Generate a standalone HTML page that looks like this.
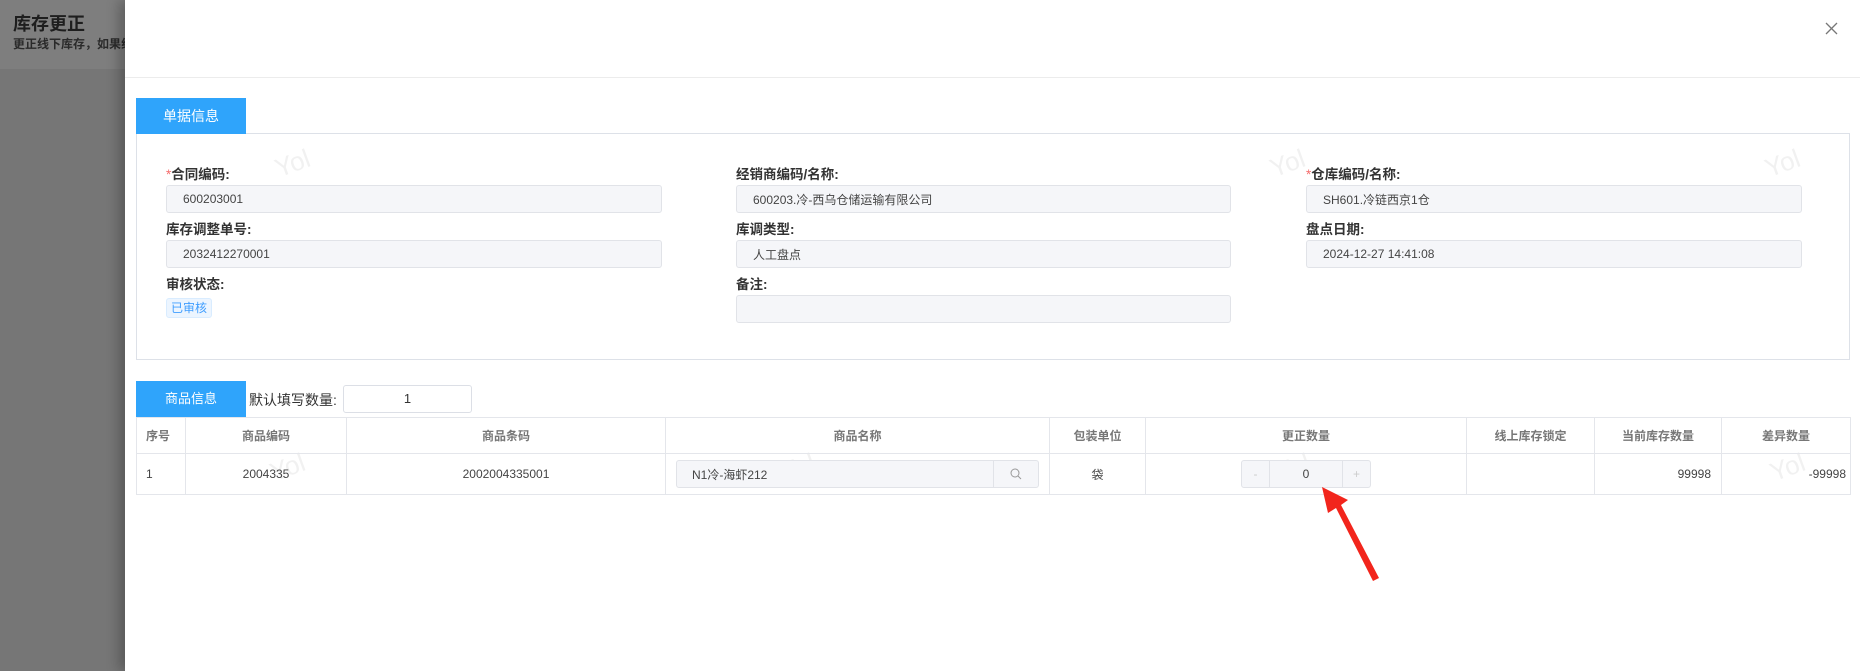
<!DOCTYPE html>
<html><head><meta charset="utf-8">
<style>
*{box-sizing:border-box;margin:0;padding:0}
body{width:1860px;height:671px;overflow:hidden;background:#767676;font-family:"Liberation Sans","Noto Sans CJK SC",sans-serif;position:relative}
.hdr{position:absolute;left:0;top:0;width:1860px;height:69px;background:#7e7e7e}
.t1{position:absolute;left:13px;top:10px;font-size:18px;font-weight:bold;color:#1e1e1e}
.t2{position:absolute;left:13px;top:35px;font-size:12px;font-weight:bold;color:#2a2a2a;white-space:nowrap}
.drawer{position:absolute;left:125px;top:0;width:1735px;height:671px;background:#fff;box-shadow:-6px 0 12px rgba(0,0,0,.25)}
.a{position:absolute}
.div{left:0;top:77px;width:1735px;height:1px;background:#ececec}
.tab{background:#2fa4fb;color:#fff;font-size:14px;text-align:center}
.lbl{font-size:13.5px;font-weight:bold;color:#333}
.lbl i{color:#f56c6c;font-style:normal;font-weight:normal}
.inp{background:#f5f6f9;border:1px solid #e1e3e8;border-radius:3px;font-size:12px;color:#444;padding-left:16px;display:flex;align-items:center}
table{border-collapse:collapse;position:absolute;left:11px;top:417px;width:1714px;table-layout:fixed}
td,th{border:1px solid #e4e6eb;font-size:12px;text-align:center;color:#444}
th{height:36px;color:#777;font-weight:bold}
td{height:41px}
.wm{color:#f1f1f1;font-size:26px;transform:rotate(-20deg);font-family:"Liberation Sans",sans-serif}
</style></head><body>
<div class="hdr"></div>
<div class="t1">库存更正</div>
<div class="t2">更正线下库存，如果线下库存有变化请及时更正</div>
<div class="drawer">
  <div class="a div"></div>
  <svg class="a" style="left:1700px;top:22px" width="13" height="13" viewBox="0 0 13 13"><path d="M1 1L12 12M12 1L1 12" stroke="#777" stroke-width="1.3"/></svg>
  <div class="a" style="left:11px;top:133px;width:1714px;height:227px;border:1px solid #dde1e8"></div>
  <div class="a tab" style="left:11px;top:98px;width:110px;height:36px;line-height:36px">单据信息</div>

  <div class="a lbl" style="left:41px;top:163px"><i>*</i>合同编码:</div>
  <div class="a inp" style="left:41px;top:185px;width:496px;height:28px">600203001</div>
  <div class="a lbl" style="left:41px;top:218px">库存调整单号:</div>
  <div class="a inp" style="left:41px;top:240px;width:496px;height:28px">2032412270001</div>
  <div class="a lbl" style="left:41px;top:273px">审核状态:</div>
  <div class="a" style="left:41px;top:298px;width:46px;height:20px;background:#ecf5ff;border:1px solid #d9ecff;border-radius:3px;color:#409eff;font-size:12px;text-align:center;line-height:18px">已审核</div>

  <div class="a lbl" style="left:611px;top:163px">经销商编码/名称:</div>
  <div class="a inp" style="left:611px;top:185px;width:495px;height:28px">600203.冷-西乌仓储运输有限公司</div>
  <div class="a lbl" style="left:611px;top:218px">库调类型:</div>
  <div class="a inp" style="left:611px;top:240px;width:495px;height:28px">人工盘点</div>
  <div class="a lbl" style="left:611px;top:273px">备注:</div>
  <div class="a inp" style="left:611px;top:295px;width:495px;height:28px"></div>

  <div class="a lbl" style="left:1181px;top:163px"><i>*</i>仓库编码/名称:</div>
  <div class="a inp" style="left:1181px;top:185px;width:496px;height:28px">SH601.冷链西京1仓</div>
  <div class="a lbl" style="left:1181px;top:218px">盘点日期:</div>
  <div class="a inp" style="left:1181px;top:240px;width:496px;height:28px">2024-12-27 14:41:08</div>

  <div class="a tab" style="left:11px;top:381px;width:110px;height:36px;line-height:36px;font-size:13px">商品信息</div>
  <div class="a" style="left:124px;top:390px;font-size:14px;color:#333">默认填写数量:</div>
  <div class="a" style="left:218px;top:385px;width:129px;height:28px;border:1px solid #dcdfe6;border-radius:3px;text-align:center;line-height:26px;font-size:13px;color:#333">1</div>

  <div class="a wm" style="left:150px;top:148px">Yol</div>
  <div class="a wm" style="left:1145px;top:148px">Yol</div>
  <div class="a wm" style="left:1640px;top:148px">Yol</div>
  <div class="a wm" style="left:145px;top:452px">Yol</div>
  <div class="a wm" style="left:655px;top:452px">Yol</div>
  <div class="a wm" style="left:1150px;top:452px">Yol</div>
  <div class="a wm" style="left:1645px;top:452px">Yol</div>

  <table>
    <colgroup><col style="width:49px"><col style="width:161px"><col style="width:319px"><col style="width:384px"><col style="width:96px"><col style="width:321px"><col style="width:128px"><col style="width:127px"><col style="width:129px"></colgroup>
    <tr><th style="text-align:left;padding-left:9px">序号</th><th>商品编码</th><th>商品条码</th><th>商品名称</th><th>包装单位</th><th>更正数量</th><th>线上库存锁定</th><th>当前库存数量</th><th>差异数量</th></tr>
    <tr><td style="text-align:left;padding-left:9px">1</td><td>2004335</td><td>2002004335001</td>
      <td><div style="margin:0 10px;height:28px;border:1px solid #e1e3e8;border-radius:3px;background:#f5f6f9;display:flex;align-items:center;font-size:12px;text-align:left"><span style="flex:1;padding-left:15px">N1冷-海虾212</span><span style="width:45px;height:26px;border-left:1px solid #e1e3e8;display:flex;align-items:center;justify-content:center"><svg width="12" height="12" viewBox="0 0 12 12"><circle cx="5" cy="5" r="4" fill="none" stroke="#999" stroke-width="1"/><path d="M8 8L11 11" stroke="#999"/></svg></span></div></td>
      <td>袋</td>
      <td><div style="margin:0 auto;width:130px;height:28px;border:1px solid #e1e3e8;border-radius:3px;background:#f5f6f9;display:flex;font-size:12px"><span style="width:28px;border-right:1px solid #e1e3e8;color:#ccc;line-height:26px">-</span><span style="flex:1;line-height:26px;color:#444">0</span><span style="width:28px;border-left:1px solid #e1e3e8;color:#ccc;line-height:26px">+</span></div></td>
      <td></td><td style="text-align:right;padding-right:10px">99998</td><td style="text-align:right;padding-right:4px">-99998</td></tr>
  </table>
</div>
<svg style="left:0;top:0;position:absolute" width="1860" height="671"><path d="M1322 487L1348 500L1341 505L1379 578L1373 581L1336 508L1328 513Z" fill="#f2251c"/></svg>
</body></html>
